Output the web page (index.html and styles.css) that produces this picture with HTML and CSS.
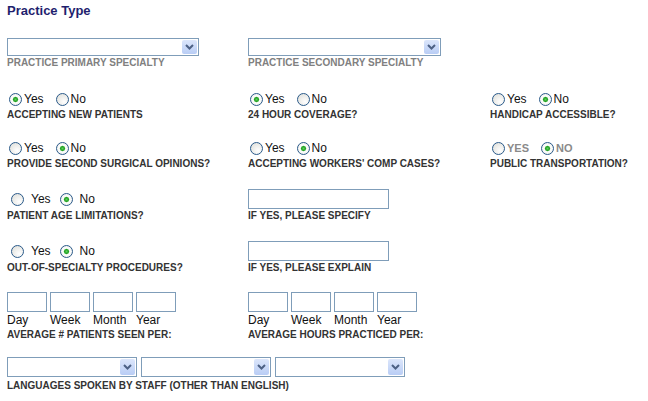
FILE: index.html
```html
<!DOCTYPE html>
<html>
<head>
<meta charset="utf-8">
<link rel="stylesheet" href="styles.css">
</head>
<body>
<div class="page">
  <h1 class="title">Practice Type</h1>

  <div class="grid row-sel">
    <div class="cell">
      <div class="select w190"><span class="arrow"><svg width="9" height="6" viewBox="0 0 9 6"><path d="M1 1 L4.5 4.5 L8 1" fill="none" stroke="#4d6185" stroke-width="2"/></svg></span></div>
      <div class="lbl gray">PRACTICE PRIMARY SPECIALTY</div>
    </div>
    <div class="cell">
      <div class="select w192"><span class="arrow"><svg width="9" height="6" viewBox="0 0 9 6"><path d="M1 1 L4.5 4.5 L8 1" fill="none" stroke="#4d6185" stroke-width="2"/></svg></span></div>
      <div class="lbl gray">PRACTICE SECONDARY SPECIALTY</div>
    </div>
  </div>

  <div class="grid row-r1">
    <div class="cell">
      <div class="radios"><label><input type="radio" name="a" checked>Yes</label><label><input type="radio" name="a">No</label></div>
      <div class="lbl">ACCEPTING NEW PATIENTS</div>
    </div>
    <div class="cell">
      <div class="radios"><label><input type="radio" name="b" checked>Yes</label><label><input type="radio" name="b">No</label></div>
      <div class="lbl">24 HOUR COVERAGE?</div>
    </div>
    <div class="cell">
      <div class="radios"><label><input type="radio" name="c">Yes</label><label><input type="radio" name="c" checked>No</label></div>
      <div class="lbl">HANDICAP ACCESSIBLE?</div>
    </div>
  </div>

  <div class="grid row-r2">
    <div class="cell">
      <div class="radios"><label><input type="radio" name="d">Yes</label><label><input type="radio" name="d" checked>No</label></div>
      <div class="lbl">PROVIDE SECOND SURGICAL OPINIONS?</div>
    </div>
    <div class="cell">
      <div class="radios"><label><input type="radio" name="e">Yes</label><label><input type="radio" name="e" checked>No</label></div>
      <div class="lbl">ACCEPTING WORKERS' COMP CASES?</div>
    </div>
    <div class="cell">
      <div class="radios caps"><label><input type="radio" name="f">YES</label><label><input type="radio" name="f" checked>NO</label></div>
      <div class="lbl">PUBLIC TRANSPORTATION?</div>
    </div>
  </div>

  <div class="grid bottom row-r3">
    <div class="cell">
      <div class="radios spaced"><label><input type="radio" name="g">Yes</label><label><input type="radio" name="g" checked>No</label></div>
      <div class="lbl">PATIENT AGE LIMITATIONS?</div>
    </div>
    <div class="cell">
      <div class="text w140"></div>
      <div class="lbl">IF YES, PLEASE SPECIFY</div>
    </div>
  </div>

  <div class="grid bottom row-r4">
    <div class="cell">
      <div class="radios spaced"><label><input type="radio" name="h">Yes</label><label><input type="radio" name="h" checked>No</label></div>
      <div class="lbl">OUT-OF-SPECIALTY PROCEDURES?</div>
    </div>
    <div class="cell">
      <div class="text w140"></div>
      <div class="lbl">IF YES, PLEASE EXPLAIN</div>
    </div>
  </div>

  <div class="grid row-nums">
    <div class="cell">
      <div class="nums">
        <div class="num"><div class="text w40"></div><span>Day</span></div>
        <div class="num"><div class="text w40"></div><span>Week</span></div>
        <div class="num"><div class="text w40"></div><span>Month</span></div>
        <div class="num"><div class="text w40"></div><span>Year</span></div>
      </div>
      <div class="lbl">AVERAGE # PATIENTS SEEN PER:</div>
    </div>
    <div class="cell">
      <div class="nums">
        <div class="num"><div class="text w40"></div><span>Day</span></div>
        <div class="num"><div class="text w40"></div><span>Week</span></div>
        <div class="num"><div class="text w40"></div><span>Month</span></div>
        <div class="num"><div class="text w40"></div><span>Year</span></div>
      </div>
      <div class="lbl">AVERAGE HOURS PRACTICED PER:</div>
    </div>
  </div>

  <div class="row-lang">
    <div class="langs">
      <div class="select w130"><span class="arrow"><svg width="9" height="6" viewBox="0 0 9 6"><path d="M1 1 L4.5 4.5 L8 1" fill="none" stroke="#4d6185" stroke-width="2"/></svg></span></div>
      <div class="select w130"><span class="arrow"><svg width="9" height="6" viewBox="0 0 9 6"><path d="M1 1 L4.5 4.5 L8 1" fill="none" stroke="#4d6185" stroke-width="2"/></svg></span></div>
      <div class="select w130"><span class="arrow"><svg width="9" height="6" viewBox="0 0 9 6"><path d="M1 1 L4.5 4.5 L8 1" fill="none" stroke="#4d6185" stroke-width="2"/></svg></span></div>
    </div>
    <div class="lbl lang-lbl">LANGUAGES SPOKEN BY STAFF (OTHER THAN ENGLISH)</div>
  </div>
</div>
</body>
</html>
```

FILE: styles.css
```css
html, body {
  margin: 0;
  padding: 0;
  background: #ffffff;
}
.page {
  padding: 3px 0 0 7px;
  font-family: "Liberation Sans", Arial, sans-serif;
  color: #333333;
}
.title {
  margin: 0;
  font-size: 13px;
  font-weight: bold;
  color: #1f1f6e;
  line-height: 16px;
}
.grid {
  display: grid;
  grid-template-columns: 241px 242px 150px;
}
.grid.bottom { align-items: end; }
.cell {
  display: flex;
  flex-direction: column;
  align-items: flex-start;
}
.row-sel { margin-top: 19px; }
.row-r1 { margin-top: 23px; }
.row-r2 { margin-top: 20px; }
.row-r3 { margin-top: 19px; }
.row-r4 { margin-top: 19px; }
.row-nums { margin-top: 18px; }
.row-lang { margin-top: 16px; }

.lbl {
  font-size: 10px;
  font-weight: bold;
  line-height: 12px;
  color: #333333;
  white-space: nowrap;
}
.lbl.gray { color: #808080; margin-top: 1px; }

.select {
  position: relative;
  height: 16px;
  border: 1px solid #7f9db9;
  background: #ffffff;
}
.w190 { width: 190px; }
.w192 { width: 191px; }
.w130 { width: 128px; }
.arrow {
  position: absolute;
  right: 1px;
  top: 1px;
  width: 15px;
  height: 14px;
  background: linear-gradient(#dce6fb, #b9cdf5);
  border-radius: 2px;
  display: flex;
  align-items: center;
  justify-content: center;
}

.radios {
  display: flex;
  gap: 10px;
  font-size: 12px;
  line-height: 15px;
  color: #111111;
  margin-bottom: 2px;
}
.radios label {
  display: flex;
  align-items: center;
}
.radios.spaced {
  gap: 7px;
  padding-left: 2px;
  margin-bottom: 3px;
}
.radios.spaced input { margin-right: 7px; }
.radios.caps {
  color: #8a8a8a;
  font-size: 11px;
  font-weight: bold;
}
.radios input {
  appearance: none;
  -webkit-appearance: none;
  width: 13px;
  height: 13px;
  margin: 0 2px 0 2px;
  border: 1px solid #2a5a8a;
  border-radius: 50%;
  background: radial-gradient(circle at 65% 70%, #ffffff 0%, #dcdcd6 100%);
}
.radios input:checked {
  background: radial-gradient(circle, #5fcf5f 0, #21a121 2px, #ffffff 3.2px, #e6e6e0 100%);
}

.text {
  height: 18px;
  border: 1px solid #7f9db9;
  background: #ffffff;
}
.w140 { width: 139px; }
.w40 { width: 38px; }
.bottom .text { margin-bottom: 1px; }

.nums {
  display: flex;
  gap: 3px;
}
.num {
  display: flex;
  flex-direction: column;
  font-size: 12px;
  line-height: 15px;
  color: #111111;
}
.num span { margin-top: 1px; margin-bottom: 1px; }

.langs {
  display: flex;
  gap: 4px;
}
.langs .select { height: 18px; }
.langs .arrow { height: 16px; }
.lang-lbl { margin-top: 3px; }
```
